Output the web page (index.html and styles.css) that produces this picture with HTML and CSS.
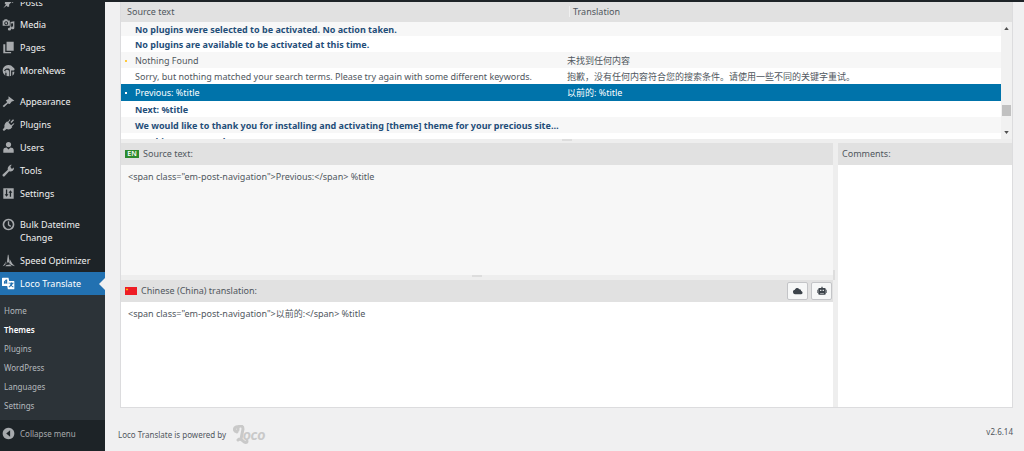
FILE: index.html
```html
<!DOCTYPE html>
<html lang="en">
<head>
<meta charset="utf-8">
<meta name="viewport" content="width=device-width, initial-scale=1">
<title>Loco Translate</title>
<link rel="stylesheet" href="styles.css">
</head>
<body>
<div class="adminbar"></div>
<div class="app">
  <nav class="menu" aria-label="Main menu">
    <a class="item item-cut" href="#"><svg class="icon" viewBox="0 0 20 20"><path d="M9 2l9 0-1 9-2-2-4 4 0 3-2 1-2-2-5 4 4-6-2-2 1-2 3 0 3-4z"/></svg><span>Posts</span></a>
    <a class="item" href="#"><svg class="icon" viewBox="0 0 20 20"><path fill-rule="evenodd" d="M1 4h2l1-2h4l1 2h3v8H1zM6.500 5a3 3 0 1 0 .01 0zM6.500 6.500a1.500 1.500 0 1 1-.01 0z"/><path d="M13 6l6-1v10a2.500 2.200 0 1 1-2-2V8l-3 .5V17a2.500 2.200 0 1 1-2-2v-2h1z"/></svg><span>Media</span></a>
    <a class="item" href="#"><svg class="icon" viewBox="0 0 20 20"><path d="M7 1h11v14H7zM2 5h3v12h9v2H2z"/></svg><span>Pages</span></a>
    <a class="item" href="#"><svg class="icon" viewBox="0 0 20 20"><path fill-rule="evenodd" d="M1 10a9 9 0 0 1 16-5c3 2 3 4 1 5h-4v8l-2 1V9c0-3-7-3-9 1l2 1v7a9 9 0 0 1-4-8zM8 9a3 3 0 0 1 3 3v7l-4-.5v-5H5a3 3 0 0 1 3-4.500zM16 12h3c0 3-1 5-3 6z"/></svg><span>MoreNews</span></a>
    <a class="item spaced" href="#"><svg class="icon" viewBox="0 0 20 20"><path d="M10 2l9 7-4 1-3 4-3-1-6 6-2-2 7-6-2-3 4-2z"/></svg><span>Appearance</span></a>
    <a class="item" href="#"><svg class="icon" viewBox="0 0 20 20"><path d="M12 2l1 1-3 4 4 4 4-3 1 1-4 4 1 1-3 3c-2 1-4 1-6 0l-4 3-2-2 3-4c-1-2 0-4 1-6l3-3 1 1z"/><path d="M13 6l4-4 1.500 1.500-4 4z"/></svg><span>Plugins</span></a>
    <a class="item" href="#"><svg class="icon" viewBox="0 0 20 20"><circle cx="10" cy="5.500" r="4"/><path d="M2 18v-4c0-3 3-4 5-4l3 3 3-3c2 0 5 1 5 4v4z"/></svg><span>Users</span></a>
    <a class="item" href="#"><svg class="icon" viewBox="0 0 20 20"><path d="M17 7l1.500-2A5.500 5.500 0 0 1 11 11l-7 8c-2 1-4-1-3-3l8-7c-1-4 2-8 6-8l-2 3 1 3z"/></svg><span>Tools</span></a>
    <a class="item" href="#"><svg class="icon" viewBox="0 0 20 20"><path fill-rule="evenodd" d="M2 2h16v16H2zM6 4v7H4l3 4 3-4H8V4zM13 5l-3 4h2v6h2V9h2z"/></svg><span>Settings</span></a>
    <a class="item item-tall spaced" href="#"><svg class="icon" viewBox="0 0 20 20"><path fill-rule="evenodd" d="M10 1a9 9 0 1 0 .01 0zM10 3.500a6.500 6.500 0 1 1-.01 0zM9 5h2v5l3 2-1 2-4-3z"/></svg><span>Bulk Datetime Change</span></a>
    <a class="item" href="#"><svg class="icon" viewBox="0 0 20 20"><path d="M9 1h1l2 14-3-3-2 4 2-15zM12 8l4 7 4 4-6-2-2-2zM6 11l-1 6-4 2 3-4zM7 17l5-1 3 3H5z"/></svg><span>Speed Optimizer</span></a>
    <a class="item current" href="#"><svg class="icon" viewBox="0 0 20 20"><path fill-rule="evenodd" d="M1 1h9l1 5h7a1 1 0 0 1 1 1v11a1 1 0 0 1-1 1H9l-1-5H1a1 1 0 0 1-1-1V2a1 1 0 0 1 1-1zM3 11l1-1h3l1 1V4H6L3 7zM5 8l1-2v2zM10 9v1h3c0 2-1 4-3 5l1 1 3-2 3 2 1-1-3-2 2-3h1V9h-3V8h-1v1z"/></svg><span>Loco Translate</span></a>
    <div class="submenu">
      <a href="#">Home</a>
      <a class="active" href="#">Themes</a>
      <a href="#">Plugins</a>
      <a href="#">WordPress</a>
      <a href="#">Languages</a>
      <a href="#">Settings</a>
    </div>
    <button class="item collapse" type="button"><svg class="icon" viewBox="0 0 20 20"><path fill-rule="evenodd" d="M10 1a9 9 0 1 0 .01 0zM12.500 5v10l-6-5z"/></svg><span>Collapse menu</span></button>
  </nav>

  <main class="main">
    <div class="editor">
      <section class="list">
        <table class="strings">
          <colgroup><col class="col-source"><col></colgroup>
          <thead><tr><th>Source text</th><th class="divided">Translation</th></tr></thead>
          <tbody>
            <tr class="todo first"><td>No plugins were selected to be activated. No action taken.</td><td></td></tr>
            <tr class="todo"><td>No plugins are available to be activated at this time.</td><td></td></tr>
            <tr class="edited"><td>Nothing Found</td><td>未找到任何内容</td></tr>
            <tr><td>Sorry, but nothing matched your search terms. Please try again with some different keywords.</td><td>抱歉，没有任何内容符合您的搜索条件。请使用一些不同的关键字重试。</td></tr>
            <tr class="edited selected"><td>Previous: %title</td><td>以前的: %title</td></tr>
            <tr class="todo"><td>Next: %title</td><td></td></tr>
            <tr class="todo"><td>We would like to thank you for installing and activating [theme] theme for your precious site…</td><td></td></tr>
            <tr class="todo"><td>Breaking News Card</td><td></td></tr>
          </tbody>
        </table>
        <div class="scroll">
          <svg class="arrow" viewBox="0 0 6 4"><path d="M0 4l3-4 3 4z"/></svg>
          <div class="thumb"></div>
          <svg class="arrow" viewBox="0 0 6 4"><path d="M0 0l3 4 3-4z"/></svg>
        </div>
      </section>
      <div class="split"><i></i></div>
      <div class="panes">
        <div class="texts">
          <section class="pane">
            <header class="bar"><span class="lang">EN</span><label for="source">Source text:</label></header>
            <textarea id="source" class="field source" readonly spellcheck="false">&lt;span class="em-post-navigation"&gt;Previous:&lt;/span&gt; %title</textarea>
          </section>
          <div class="split"><i></i></div>
          <section class="pane">
            <header class="bar">
              <svg class="flag" viewBox="0 0 12 8"><path fill="#ee1c25" d="M0 0h12v8H0z"/><path fill="#ffde00" d="M2 1l.4 1h1l-.8.6.3 1-.9-.6-.9.600.3-1L.6 2h1z"/></svg>
              <label for="target">Chinese (China) translation:</label>
              <div class="tools">
                <button type="button" class="tool" aria-label="Suggestions"><svg viewBox="0 0 16 16"><path d="M4 13a3.500 3.500 0 0 1-1-7c1-3 5-4 7-1 2 0 3 1 3 3 3 1 3 5 0 5z"/></svg></button>
                <button type="button" class="tool" aria-label="Auto translate"><svg viewBox="0 0 16 16"><path fill-rule="evenodd" d="M7 1h2v2h3a2 2 0 0 1 2 2v7a2 2 0 0 1-2 2H4a2 2 0 0 1-2-2V5a2 2 0 0 1 2-2h3zM5 6v2h2V6zM9 6v2h2V6zM5 11v1h6v-1zM0 6h1v5H0zM15 6h1v5h-1z"/></svg></button>
              </div>
            </header>
            <textarea id="target" class="field target" spellcheck="false">&lt;span class="em-post-navigation"&gt;以前的:&lt;/span&gt; %title</textarea>
          </section>
        </div>
        <div class="vsplit"><i></i></div>
        <section class="pane comments">
          <header class="bar"><label for="comments">Comments:</label></header>
          <textarea id="comments" class="field" spellcheck="false"></textarea>
        </section>
      </div>
    </div>
    <footer class="footer">
      <span class="powered">Loco Translate is powered by
        <svg class="logo" viewBox="0 0 34 20" role="img" aria-label="Loco"><path class="swash" d="M4 7C0 6 1 1 5 2c3-2 5-1 5 2L8 14M5 3l0 2M5 15c2-2 4 0 5 1 2 2 4 2 4 0"/><text x="10" y="15">oco</text></svg>
      </span>
      <span>v2.6.14</span>
    </footer>
  </main>
</div>
</body>
</html>
```
FILE: styles.css
```css
* { box-sizing: border-box; }

body {
  margin: 0;
  background: #f0f0f1;
  color: #50575e;
  font-family: "Noto Sans", "Noto Sans CJK SC", sans-serif;
  font-size: 9px;
  line-height: 16px;
}

a { color: inherit; text-decoration: none; }
button, textarea { font: inherit; color: inherit; }

.adminbar { height: 2px; background: #1d2327; }

.app {
  display: flex;
  min-height: calc(100vh - 2px);
}

/* Side menu */
.menu {
  width: 105px;
  flex: none;
  background: #1d2327;
  color: #f0f0f1;
}

.item {
  display: flex;
  align-items: center;
  gap: 5px;
  width: 100%;
  height: 23px;
  padding-left: 2px;
  line-height: 13px;
}

.item-cut { height: 11px; align-items: flex-end; padding-bottom: 4px; overflow: hidden; }
.item-tall { height: 36px; align-items: flex-start; padding-top: 5px; }
.spaced { margin-top: 8px; }
.icon { width: 13px; height: 13px; flex: none; fill: #a7aaad; }

.current {
  position: relative;
  background: #2271b1;
  color: #fff;
}
.current .icon { fill: #fff; }
.current::after {
  content: "";
  position: absolute;
  right: 0;
  top: 6px;
  border: 6px solid transparent;
  border-left-width: 0;
  border-right-color: #f0f0f1;
}

.submenu {
  display: flex;
  flex-direction: column;
  padding: 6px 4px 5px;
  background: #2c3338;
  color: #b4b9be;
  font-size: 8px;
  line-height: 19px;
}
.submenu .active { color: #fff; font-weight: 600; }

.collapse {
  height: 26px;
  border: 0;
  background: none;
  color: #a7aaad;
  font-size: 8px;
  text-align: left;
  padding: 0 0 0 2px;
}

/* Editor */
.main {
  flex: 1;
  min-width: 0;
  padding: 0 11px 0 15px;
}

.editor {
  border: 1px solid #dcdcde;
  border-top: 0;
  background: #eee;
}

.list {
  display: flex;
  height: 137px;
  overflow: hidden;
  background: #fff;
}

.strings {
  flex: 1;
  table-layout: fixed;
  border-collapse: collapse;
  width: 100%;
}
.col-source { width: 50%; }
.strings th {
  height: 20px;
  padding: 0 6px;
  background: #e1e1e1;
  font-weight: 400;
  text-align: left;
}
.strings .divided { background: linear-gradient(#f0f0f0, #f0f0f0) 2px 4px / 1px 11px no-repeat #e1e1e1; }
.strings td {
  height: 16px;
  padding: 0 0 0 14px;
  line-height: 15px;
  white-space: nowrap;
  overflow: hidden;
}
.strings .divided { padding-left: 12px; background-position: 8px 4px; }
.strings td + td { padding-left: 6px; }
.strings .first td { height: 14px; line-height: 13px; }
.strings tbody tr:nth-child(odd) { background: #f7f7f7; }
.strings .todo { color: #1f4e79; font-weight: 700; }
.edited td:first-child { background: linear-gradient(#ffc93c, #ffc93c) 4px 8px / 2px 2px no-repeat; }
.strings tbody .selected:nth-child(n) { background: #0073aa; color: #fff; }
.strings .selected td { height: 17px; }
.selected td:first-child { background-image: linear-gradient(#fff, #fff); }

.scroll {
  display: flex;
  flex-direction: column;
  align-items: center;
  width: 11px;
  padding: 25px 0 5px;
  background: linear-gradient(#e1e1e1, #e1e1e1) 0 0 / 100% 20px no-repeat #f1f1f1;
}
.arrow { width: 5px; height: 3px; fill: #505050; }
.thumb { width: 9px; height: 11px; margin: auto 0 15px; background: #c1c1c1; }

.split { display: flex; justify-content: center; height: 4px; background: #eee; }
.split i { width: 10px; height: 2px; background: #ddd; }
.vsplit { display: flex; align-items: center; width: 5px; background: #eee; }
.vsplit i { width: 2px; height: 10px; background: #ddd; }

.panes { display: flex; }
.texts { flex: 1; min-width: 0; }
.pane { display: flex; flex-direction: column; }
.comments { width: 174px; }
.texts .split { height: 5px; }

.bar {
  display: flex;
  align-items: center;
  gap: 4px;
  height: 22px;
  padding: 0 1px 0 4px;
  background: #e1e1e1;
}
.lang {
  width: 14px;
  background: #2e8b2e;
  color: #fff;
  font-size: 7px;
  font-weight: 600;
  line-height: 8px;
  text-align: center;
}
.flag { width: 12px; height: 8px; }
.tools { display: flex; gap: 3px; margin-left: auto; }
.tool {
  display: flex;
  align-items: center;
  justify-content: center;
  width: 21px;
  height: 18px;
  padding: 0;
  border: 1px solid #c3c4c7;
  border-radius: 2px;
  background: #f6f7f7;
}
.tool svg { width: 10px; height: 10px; fill: #3c434a; }

.field {
  display: block;
  width: 100%;
  height: 105px;
  padding: 4px 7px;
  border: 0;
  outline: 0;
  resize: none;
  background: #fff;
}
.source { height: 110px; background: #f7f7f7; }
.comments .field { flex: 1; }

.footer {
  display: flex;
  justify-content: space-between;
  padding-top: 16px;
  font-size: 8px;
}
.powered { display: flex; align-items: center; gap: 7px; height: 22px; margin-left: -2px; }
.logo { width: 34px; height: 20px; fill: #c9c9c9; }
.logo text { font: italic 900 15px Lato, sans-serif; }
.swash { fill: none; stroke: #c9c9c9; stroke-width: 3; stroke-linecap: round; }
```
